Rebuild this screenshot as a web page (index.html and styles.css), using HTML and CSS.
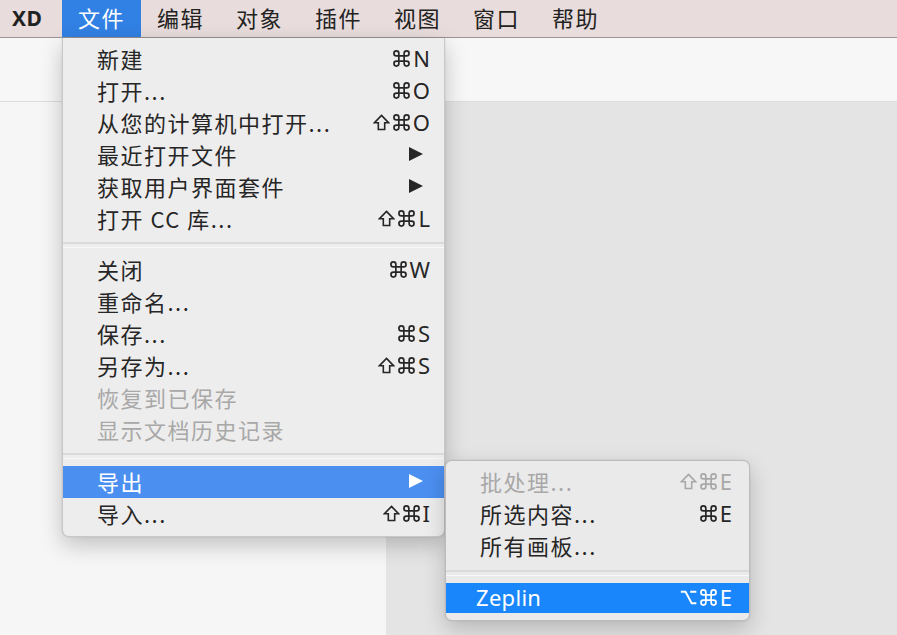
FILE: index.html
```html
<!DOCTYPE html>
<html lang="zh-CN">
<head>
<meta charset="utf-8">
<title>XD 文件菜单</title>
<link rel="stylesheet" href="styles.css">
</head>
<body>
<svg class="defs" width="0" height="0" aria-hidden="true">
  <defs>
    <symbol id="cmd" viewBox="0 0 16 16">
      <path d="M5.5 5.5 V3.2 A2.3 2.3 0 1 0 3.2 5.5 H12.8 A2.3 2.3 0 1 0 10.5 3.2 V12.8 A2.3 2.3 0 1 0 12.8 10.5 H3.2 A2.3 2.3 0 1 0 5.5 12.8 Z" fill="none" stroke="currentColor" stroke-width="1.6" stroke-linejoin="round"/>
    </symbol>
    <symbol id="shift" viewBox="0 0 16 16">
      <path d="M8 1.3 L14.6 8.2 H11 V14.6 H5 V8.2 H1.4 Z" fill="none" stroke="currentColor" stroke-width="1.5" stroke-linejoin="miter"/>
    </symbol>
    <symbol id="opt" viewBox="0 0 16 16">
      <path d="M0.8 2.6 H5.2 L11 13.4 H15.4 M9.6 2.6 H15.4" fill="none" stroke="currentColor" stroke-width="1.8"/>
    </symbol>
  </defs>
</svg>
<div class="app">
  <header class="menubar">
    <div class="mb-item mb-app">XD</div>
    <div class="mb-item mb-active">文件</div>
    <div class="mb-item">编辑</div>
    <div class="mb-item">对象</div>
    <div class="mb-item">插件</div>
    <div class="mb-item">视图</div>
    <div class="mb-item">窗口</div>
    <div class="mb-item">帮助</div>
  </header>
  <div class="toolbar"></div>
  <div class="workspace">
    <div class="panel"></div>
    <div class="canvas"></div>
  </div>

  <div class="menu">
    <div class="item"><span class="label">新建</span><span class="sc"><svg class="k"><use href="#cmd"/></svg>N</span></div>
    <div class="item"><span class="label">打开...</span><span class="sc"><svg class="k"><use href="#cmd"/></svg>O</span></div>
    <div class="item"><span class="label">从您的计算机中打开...</span><span class="sc"><svg class="k"><use href="#shift"/></svg><svg class="k"><use href="#cmd"/></svg>O</span></div>
    <div class="item"><span class="label">最近打开文件</span><svg class="arrow" viewBox="0 0 14 14" width="14" height="14"><polygon points="0,0 14,7 0,14"/></svg></div>
    <div class="item"><span class="label">获取用户界面套件</span><svg class="arrow" viewBox="0 0 14 14" width="14" height="14"><polygon points="0,0 14,7 0,14"/></svg></div>
    <div class="item"><span class="label">打开 CC 库...</span><span class="sc"><svg class="k"><use href="#shift"/></svg><svg class="k"><use href="#cmd"/></svg>L</span></div>
    <div class="sep"></div>
    <div class="item"><span class="label">关闭</span><span class="sc"><svg class="k"><use href="#cmd"/></svg>W</span></div>
    <div class="item"><span class="label">重命名...</span></div>
    <div class="item"><span class="label">保存...</span><span class="sc"><svg class="k"><use href="#cmd"/></svg>S</span></div>
    <div class="item"><span class="label">另存为...</span><span class="sc"><svg class="k"><use href="#shift"/></svg><svg class="k"><use href="#cmd"/></svg>S</span></div>
    <div class="item disabled"><span class="label">恢复到已保存</span></div>
    <div class="item disabled"><span class="label">显示文档历史记录</span></div>
    <div class="sep sep-wide"></div>
    <div class="item hl"><span class="label">导出</span><svg class="arrow" viewBox="0 0 14 14" width="14" height="14"><polygon points="0,0 14,7 0,14"/></svg></div>
    <div class="item"><span class="label">导入...</span><span class="sc"><svg class="k"><use href="#shift"/></svg><svg class="k"><use href="#cmd"/></svg>I</span></div>
  </div>

  <div class="submenu">
    <div class="item disabled"><span class="label">批处理...</span><span class="sc"><svg class="k"><use href="#shift"/></svg><svg class="k"><use href="#cmd"/></svg>E</span></div>
    <div class="item"><span class="label">所选内容...</span><span class="sc"><svg class="k"><use href="#cmd"/></svg>E</span></div>
    <div class="item"><span class="label">所有画板...</span></div>
    <div class="sep sep-sub"></div>
    <div class="item hl2 zep"><span class="label latin">Zeplin</span><span class="sc"><svg class="k"><use href="#opt"/></svg><svg class="k"><use href="#cmd"/></svg>E</span></div>
  </div>
</div>
</body>
</html>
```

FILE: styles.css
```css
* { box-sizing: border-box; }

html, body {
  margin: 0;
  padding: 0;
}

body {
  width: 897px;
  height: 635px;
  overflow: hidden;
  font-family: "Noto Sans CJK SC", "Noto Sans", sans-serif;
  color: #262626;
}

.defs {
  position: absolute;
  width: 0;
  height: 0;
  overflow: hidden;
}

.app {
  position: relative;
  width: 897px;
  height: 635px;
  display: flex;
  flex-direction: column;
}

/* ---------- menu bar ---------- */
.menubar {
  height: 38px;
  flex: none;
  display: flex;
  background: #e8dcdc;
  border-bottom: 1px solid #9d9494;
}

.mb-item {
  width: 79px;
  height: 37px;
  line-height: 35px;
  font-size: 22px;
  letter-spacing: 1.5px;
  text-align: center;
  color: #222222;
}

.mb-app {
  width: 62px;
  text-align: left;
  padding-left: 12px;
  font-family: "Noto Sans", "Liberation Sans", sans-serif;
  font-weight: 700;
  font-size: 21px;
  line-height: 37px;
  letter-spacing: 0.5px;
}

.mb-active {
  background: #3180e3;
  color: #ffffff;
}

/* ---------- background ---------- */
.toolbar {
  height: 64px;
  flex: none;
  background: #f7f7f7;
  border-bottom: 1px solid #dcdcdc;
}

.workspace {
  flex: 1;
  display: flex;
}

.panel {
  width: 386px;
  background: #f6f6f6;
}

.canvas {
  flex: 1;
  background: #e4e4e4;
}

/* ---------- menus ---------- */
.menu,
.submenu {
  position: absolute;
  font-size: 22px;
}

.menu {
  left: 62px;
  top: 38px;
  width: 383px;
  padding: 5px 0 6px;
  background: #eeeded;
  border: 1px solid #c9c7c7;
  border-top: none;
  border-radius: 0 0 7px 7px;
  box-shadow: 0 8px 22px rgba(0, 0, 0, 0.22), 0 0 2px rgba(0, 0, 0, 0.12);
}

.submenu {
  left: 445px;
  top: 460px;
  width: 305px;
  padding: 5px 0 7px;
  background: #ebeaea;
  border: 1px solid #bdbbbb;
  border-radius: 7px;
  box-shadow: 0 8px 22px rgba(0, 0, 0, 0.2), 0 0 2px rgba(0, 0, 0, 0.12);
}

.item {
  height: 32px;
  display: flex;
  align-items: center;
  justify-content: space-between;
  padding: 0 14px 2px 34px;
}

.submenu .item {
  padding: 0 17px 2px 34px;
}

.label {
  letter-spacing: 1.5px;
  line-height: 30px;
  white-space: nowrap;
}

.label.latin {
  font-family: "Noto Sans", sans-serif;
  letter-spacing: 0.3px;
}

.sc {
  display: flex;
  align-items: center;
  font-family: "Noto Sans", sans-serif;
  font-size: 22px;
  line-height: 30px;
  white-space: nowrap;
}

.k {
  width: 17px;
  height: 17px;
  margin-right: 3px;
  flex: none;
}

.arrow {
  margin-right: 7px;
  fill: #262626;
}

.disabled {
  color: #a8a8a8;
}

.hl {
  background: #4b8ff1;
  color: #ffffff;
}

.hl .arrow {
  fill: #ffffff;
}

.hl2 {
  background: #1a86fb;
  color: #ffffff;
}

.zep {
  height: 30px;
  padding-left: 30px !important;
}

.sep {
  height: 19px;
  display: flex;
  align-items: center;
}

.sep::after {
  content: "";
  display: block;
  width: 100%;
  height: 3px;
  border-top: 2px solid #dadada;
  border-bottom: 1px solid #f8f8f8;
}

.sep-wide {
  height: 20px;
}

.sep-sub {
  height: 21px;
}
```
